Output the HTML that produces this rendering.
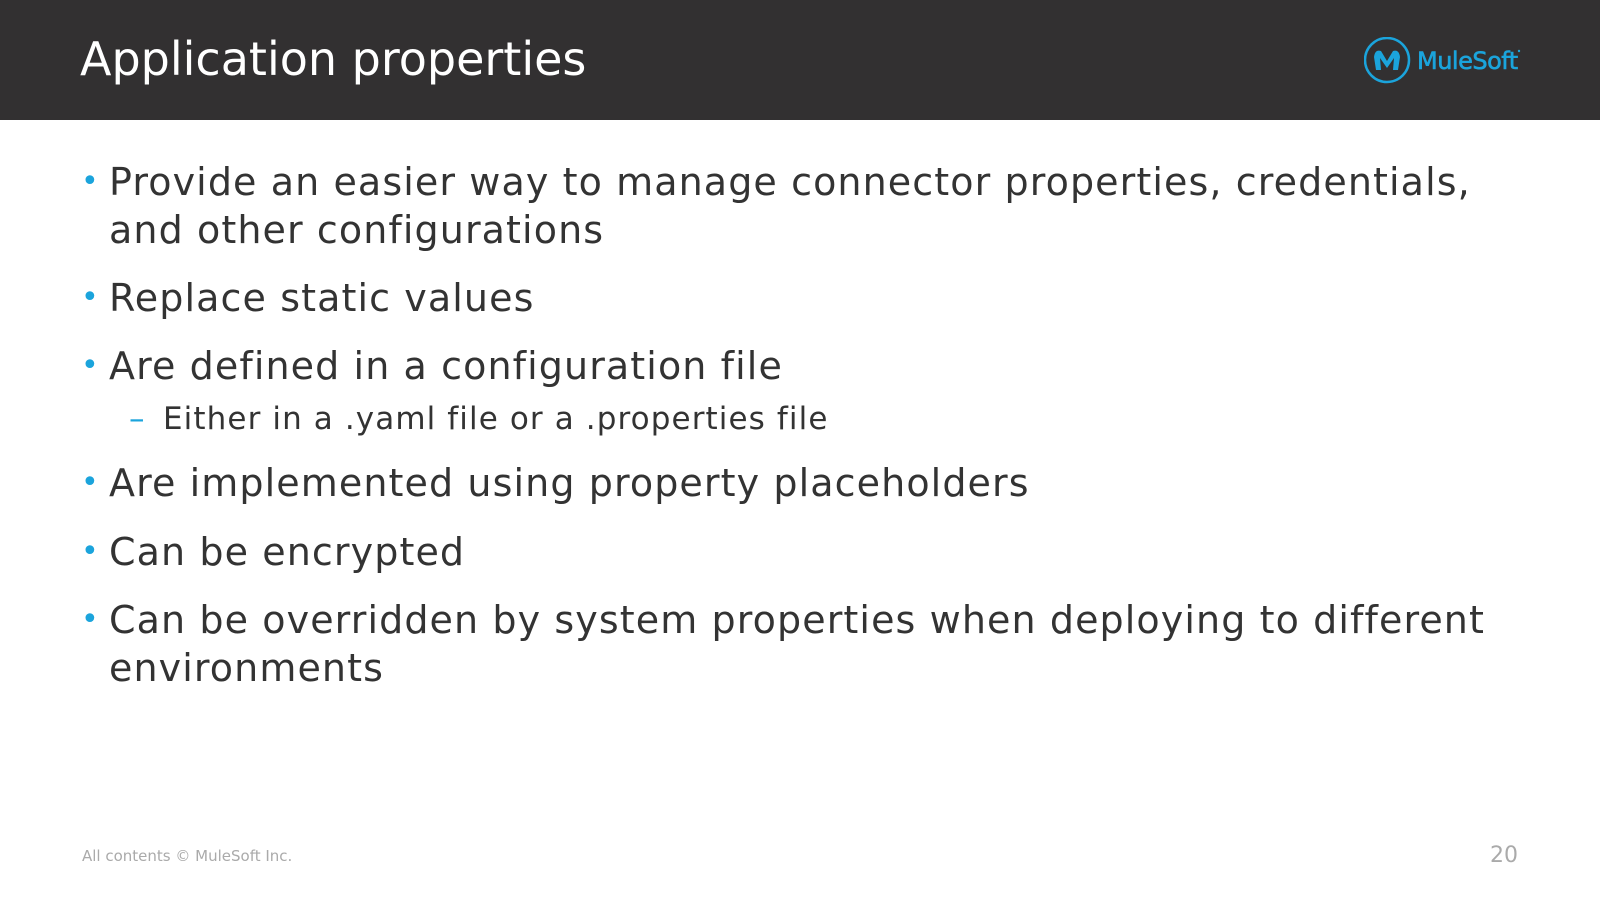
<!DOCTYPE html>
<html><head><style>
body{margin:0;width:1600px;height:900px;background:#fff;position:relative;overflow:hidden;font-family:"DejaVu Sans","Liberation Sans",sans-serif;color:#333;}
.hdr{position:absolute;left:0;top:0;width:1600px;height:120px;background:#323031;}
.title{position:absolute;left:80px;top:32px;color:#fff;font-size:46px;font-weight:normal;}
.logo{position:absolute;left:1364px;top:37px;}
.b{position:absolute;left:109px;font-size:38px;line-height:48px;color:#333;letter-spacing:1.1px;white-space:nowrap;}
.b:before{content:"•";position:absolute;left:-28px;color:#1ba4dc;font-size:30px;}
.s{position:absolute;left:163px;font-size:31px;color:#333;letter-spacing:1.1px;}
.s:before{content:"–";position:absolute;left:-34px;color:#1ba4dc;}
.foot{position:absolute;left:82px;top:847px;font-size:15px;color:#aaa;}
.num{position:absolute;right:82px;top:843px;font-size:22px;color:#aaa;}
</style></head><body>
<div class="hdr"></div>
<div class="title">Application properties</div>
<svg class="logo" width="180" height="50" viewBox="0 0 180 50">
<circle cx="23" cy="23" r="22" fill="none" stroke="#1ba4dc" stroke-width="2.5"/>
<path d="M12 33 L10 20 Q11 12 17 14 L23 24 L29 14 Q35 12 36 20 L34 33 L29 33 L30 21 L23 31 L16 21 L17 33 Z" fill="#1ba4dc"/>
<text x="53" y="32" font-family="DejaVu Sans,sans-serif" font-size="24" letter-spacing="-0.5" fill="#1ba4dc" stroke="#1ba4dc" stroke-width="0.6">MuleSoft</text>
<circle cx="155" cy="14" r="1.2" fill="#1ba4dc"/>
</svg>
<div class="b" style="top:158px">Provide an easier way to manage connector properties, credentials,<br>and other configurations</div>
<div class="b" style="top:274px">Replace static values</div>
<div class="b" style="top:342px">Are defined in a configuration file</div>
<div class="s" style="top:401px">Either in a .yaml file or a .properties file</div>
<div class="b" style="top:459px">Are implemented using property placeholders</div>
<div class="b" style="top:528px">Can be encrypted</div>
<div class="b" style="top:596px">Can be overridden by system properties when deploying to different<br>environments</div>
<div class="foot">All contents © MuleSoft Inc.</div>
<div class="num">20</div>
</body></html>
